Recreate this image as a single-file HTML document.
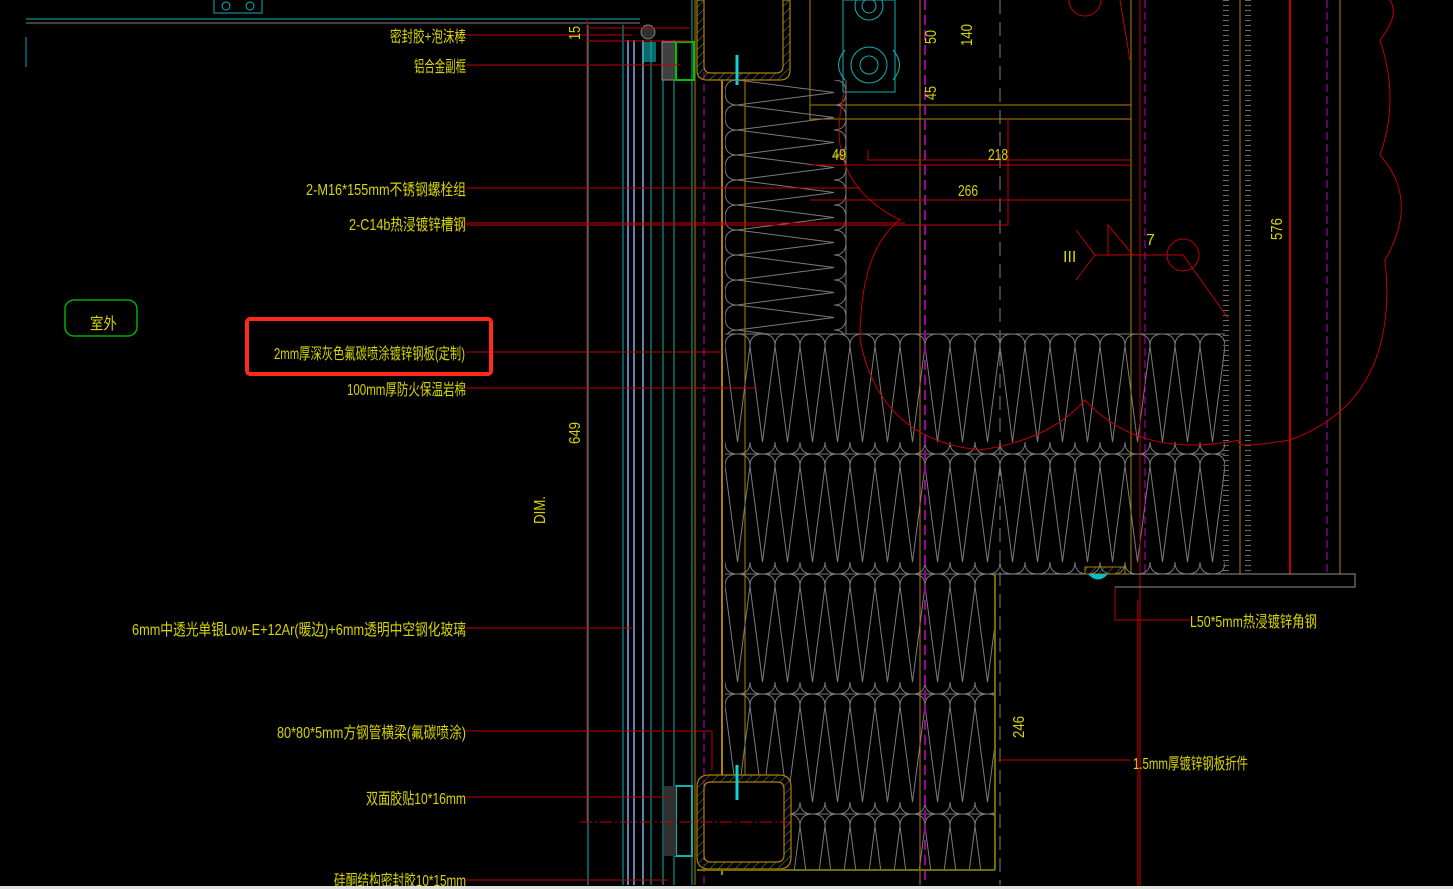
<!DOCTYPE html>
<html><head><meta charset="utf-8"><style>
html,body{margin:0;padding:0;background:#000;width:1453px;height:889px;overflow:hidden}
svg{display:block}
text{font-family:"Liberation Sans","Noto Sans CJK SC",sans-serif;fill:#d8d400;font-size:16px}
</style></head><body>
<svg width="1453" height="889" viewBox="0 0 1453 889" xmlns="http://www.w3.org/2000/svg">
<defs>
<pattern id="ins" x="725" y="334" width="25" height="120" patternUnits="userSpaceOnUse">
<path d="M0,12 Q0,0 12.5,0 Q25,0 25,12 M0,108 Q0,120 12.5,120 Q25,120 25,108 M0,12 L12.5,108 L25,12" fill="none" stroke="#7a7a7a" stroke-width="1"/>
</pattern>
<pattern id="ins2" x="725" y="80" width="121" height="25" patternUnits="userSpaceOnUse">
<path d="M12,0 Q0,0 0,12.5 Q0,25 12,25 M109,0 Q121,0 121,12.5 Q121,25 109,25 M12,0 L109,12.5 L12,25" fill="none" stroke="#7a7a7a" stroke-width="1"/>
</pattern>
<pattern id="hatch" width="6" height="6" patternUnits="userSpaceOnUse" patternTransform="rotate(45)">
<line x1="0" y1="0" x2="0" y2="6" stroke="#5a8a80" stroke-width="1"/>
</pattern>
</defs>
<rect width="1453" height="889" fill="#000"/>
<rect x="214" y="-2" width="48" height="15" fill="none" stroke="#10b0b0"/>
<circle cx="226" cy="6" r="4" fill="none" stroke="#10b0b0"/><circle cx="250" cy="6" r="4" fill="none" stroke="#10b0b0"/>
<line x1="26" y1="19" x2="640" y2="19" stroke="#10b0b0"/>
<line x1="26" y1="23" x2="640" y2="23" stroke="#808080"/>
<line x1="26" y1="37" x2="26" y2="67" stroke="#10a0c0"/>
<g stroke-width="1">
<line x1="587" y1="20" x2="587" y2="822" stroke="#c00000"/>
<line x1="588" y1="25" x2="588" y2="885" stroke="#10b0b0"/>
<line x1="623" y1="25" x2="623" y2="885" stroke="#10b0b0"/>
<line x1="628" y1="40" x2="628" y2="885" stroke="#6080b0" stroke-width="2"/>
<line x1="634" y1="40" x2="634" y2="885" stroke="#6080b0" stroke-width="2"/>
<line x1="643" y1="40" x2="643" y2="885" stroke="#6080b0" stroke-width="2"/>
<line x1="651" y1="40" x2="651" y2="885" stroke="#10b0b0"/>
<line x1="663" y1="40" x2="663" y2="885" stroke="#10b0b0"/>
<line x1="674" y1="40" x2="674" y2="885" stroke="#10b0b0"/>
<line x1="692" y1="0" x2="692" y2="885" stroke="#10b0b0"/>
<line x1="695" y1="0" x2="695" y2="885" stroke="#b08000"/>
<line x1="704" y1="0" x2="704" y2="885" stroke="#c000c0" stroke-dasharray="8 4"/>
</g>
<circle cx="648" cy="32" r="7" fill="#303030" stroke="#808080"/>
<rect x="642" y="42" width="14" height="20" fill="#10b0b0" opacity=".6"/>
<rect x="662" y="42" width="14" height="38" fill="#404040" stroke="#909090"/>
<rect x="676" y="42" width="18" height="38" fill="none" stroke="#00c000" stroke-width="2"/>
<path d="M697,0 V70 Q697,80 707,80 H780 Q790,80 790,70 V0 H783 V66 Q783,73 776,73 H711 Q704,73 704,66 V0 Z" fill="url(#hatch)" stroke="#b08000" stroke-width="1.2"/>
<line x1="737" y1="55" x2="737" y2="85" stroke="#10d0d0" stroke-width="3"/>
<rect x="843" y="0" width="52" height="92" fill="none" stroke="#10b0b0"/>
<circle cx="869" cy="6" r="14" fill="none" stroke="#10b0b0"/><circle cx="869" cy="6" r="7" fill="none" stroke="#10b0b0"/>
<circle cx="869" cy="65" r="18" fill="none" stroke="#10b0b0"/><circle cx="869" cy="65" r="9" fill="none" stroke="#10b0b0"/>
<path d="M845,50 Q832,65 845,80 M893,50 Q906,65 893,80" fill="none" stroke="#10b0b0"/>
<line x1="810" y1="0" x2="810" y2="120" stroke="#b08000"/>
<line x1="810" y1="105" x2="1131" y2="105" stroke="#b08000"/>
<line x1="810" y1="119" x2="1131" y2="119" stroke="#b08000"/>
<rect x="725" y="80" width="121" height="254" fill="url(#ins2)"/>
<line x1="846" y1="80" x2="846" y2="334" stroke="#7a7a7a"/>
<line x1="722" y1="80" x2="722" y2="875" stroke="#b08000" stroke-width="2"/>
<line x1="745" y1="80" x2="745" y2="870" stroke="#b08000"/>
<rect x="725" y="334" width="500" height="240" fill="url(#ins)"/>
<rect x="725" y="574" width="270" height="296" fill="url(#ins)"/>
<g stroke="#7a7a7a"><line x1="725" y1="334" x2="1225" y2="334"/><line x1="725" y1="454" x2="1225" y2="454"/><line x1="725" y1="574" x2="1225" y2="574"/><line x1="725" y1="694" x2="995" y2="694"/><line x1="725" y1="814" x2="995" y2="814"/></g>
<line x1="920" y1="0" x2="920" y2="885" stroke="#b08000"/>
<line x1="925" y1="0" x2="925" y2="885" stroke="#a000a0" stroke-width="2" stroke-dasharray="10 5"/>
<line x1="995" y1="574" x2="995" y2="870" stroke="#707000" stroke-width="2"/>
<line x1="1000" y1="0" x2="1000" y2="885" stroke="#808080" stroke-dasharray="14 8"/>
<line x1="1131" y1="0" x2="1131" y2="574" stroke="#b08000"/>
<line x1="1145" y1="0" x2="1145" y2="574" stroke="#c000c0" stroke-dasharray="8 4"/>
<line x1="1140" y1="0" x2="1140" y2="889" stroke="#c00000"/>
<path d="M1226,0 V574 M1248,0 V574" stroke="#6a6a6a" stroke-width="6" stroke-dasharray="1 4" fill="none"/>
<line x1="1240" y1="0" x2="1240" y2="574" stroke="#b08000"/>
<line x1="1290" y1="0" x2="1290" y2="574" stroke="#c00000" stroke-width="2"/>
<line x1="1327" y1="0" x2="1327" y2="574" stroke="#c000c0" stroke-dasharray="8 4"/>
<line x1="1340" y1="0" x2="1340" y2="574" stroke="#b08000"/>
<path d="M1000,574 H1240 V574 H1355 V587 H1115" fill="none" stroke="#909090"/>
<rect x="1085" y="567" width="40" height="7" fill="url(#hatch)" stroke="#b08000"/>
<path d="M1088,574 Q1098,585 1108,574" fill="#10c0c0"/>
<!-- bottom tube -->
<rect x="697" y="775" width="94" height="94" rx="12" fill="#000"/>
<line x1="704" y1="780" x2="704" y2="865" stroke="#c000c0" stroke-dasharray="8 4"/>
<path fill-rule="evenodd" d="M709,775 H779 Q791,775 791,787 V857 Q791,869 779,869 H709 Q697,869 697,857 V787 Q697,775 709,775 Z M711,782 H777 Q784,782 784,789 V855 Q784,862 777,862 H711 Q704,862 704,855 V789 Q704,782 711,782 Z" fill="url(#hatch)" stroke="#b08000" stroke-width="1.2"/>
<line x1="737" y1="765" x2="737" y2="800" stroke="#10d0d0" stroke-width="3"/>
<rect x="676" y="786" width="16" height="70" fill="none" stroke="#10b0b0" stroke-width="2"/>
<rect x="664" y="786" width="12" height="70" fill="#303030"/>
<line x1="697" y1="870" x2="995" y2="870" stroke="#707000" stroke-width="2"/>
<path d="M845,90 Q820,180 900,220 Q860,250 860,340 Q880,440 980,450 Q1050,440 1085,400 Q1140,460 1240,440 Q1230,450 1290,440 Q1400,400 1385,260 Q1420,200 1380,155 Q1400,100 1380,40 Q1400,15 1390,0" fill="none" stroke="#c00000"/>
<circle cx="1085" cy="0" r="16" fill="none" stroke="#c00000"/>
<circle cx="1183" cy="255" r="16" fill="none" stroke="#c00000"/>
<path d="M1183,255 L1228,318 M1095,255 H1183 M1095,255 L1076,230 M1095,255 L1076,280 M1108,255 V225 L1133,255 M1120,0 L1130,60" fill="none" stroke="#c00000"/>
<g stroke="#c00000" fill="none">
<path d="M587,28 H690 M587,41 H690 M868,150 V160 H1131 M810,165 H1131 M810,200 H1131 M1008,119 V225 H466 M1115,587 V620 H1190 M998,760 H1130 M1138,600 V889"/>
</g>
<g stroke="#c00000">
<line x1="466" y1="35" x2="632" y2="35"/><line x1="466" y1="65" x2="680" y2="65"/>
<line x1="466" y1="188" x2="860" y2="188"/><line x1="466" y1="223" x2="905" y2="223"/>
<line x1="466" y1="352" x2="722" y2="352"/><line x1="466" y1="388" x2="757" y2="388"/>
<line x1="466" y1="628" x2="632" y2="628"/><line x1="466" y1="731" x2="712" y2="731"/>
<line x1="712" y1="731" x2="712" y2="770"/>
<line x1="466" y1="797" x2="668" y2="797"/><line x1="466" y1="880" x2="668" y2="880"/>
<line x1="580" y1="822" x2="790" y2="822" stroke-dasharray="12 3 2 3"/>
</g>
<text x="390" y="42" textLength="76" lengthAdjust="spacingAndGlyphs">密封胶+泡沫棒</text>
<text x="414" y="72" textLength="52" lengthAdjust="spacingAndGlyphs">铝合金副框</text>
<text x="306" y="195" textLength="160" lengthAdjust="spacingAndGlyphs">2-M16*155mm不锈钢螺栓组</text>
<text x="349" y="230" textLength="117" lengthAdjust="spacingAndGlyphs">2-C14b热浸镀锌槽钢</text>
<text x="274" y="359" textLength="191" lengthAdjust="spacingAndGlyphs">2mm厚深灰色氟碳喷涂镀锌钢板(定制)</text>
<text x="347" y="395" textLength="119" lengthAdjust="spacingAndGlyphs">100mm厚防火保温岩棉</text>
<text x="132" y="635" textLength="334" lengthAdjust="spacingAndGlyphs">6mm中透光单银Low-E+12Ar(暖边)+6mm透明中空钢化玻璃</text>
<text x="277" y="738" textLength="189" lengthAdjust="spacingAndGlyphs">80*80*5mm方钢管横梁(氟碳喷涂)</text>
<text x="366" y="804" textLength="100" lengthAdjust="spacingAndGlyphs">双面胶贴10*16mm</text>
<text x="334" y="886" textLength="132" lengthAdjust="spacingAndGlyphs">硅酮结构密封胶10*15mm</text>
<text x="1190" y="627" textLength="127" lengthAdjust="spacingAndGlyphs">L50*5mm热浸镀锌角钢</text>
<text x="1133" y="769" textLength="115" lengthAdjust="spacingAndGlyphs">1.5mm厚镀锌钢板折件</text>
<text x="832" y="160" font-size="15" textLength="14" lengthAdjust="spacingAndGlyphs">49</text>
<text x="988" y="160" font-size="15" textLength="20" lengthAdjust="spacingAndGlyphs">218</text>
<text x="958" y="196" font-size="15" textLength="20" lengthAdjust="spacingAndGlyphs">266</text>
<text x="1146" y="245" font-size="15">7</text>
<text x="1063" y="262" font-size="14">III</text>
<text font-size="15" transform="translate(580,444) rotate(-90)" textLength="22" lengthAdjust="spacingAndGlyphs">649</text>
<text font-size="14" transform="translate(545,524) rotate(-90)" textLength="28" lengthAdjust="spacingAndGlyphs">DIM.</text>
<text font-size="15" transform="translate(1282,240) rotate(-90)" textLength="22" lengthAdjust="spacingAndGlyphs">576</text>
<text font-size="15" transform="translate(1024,738) rotate(-90)" textLength="22" lengthAdjust="spacingAndGlyphs">246</text>
<text font-size="15" transform="translate(580,40) rotate(-90)" textLength="14" lengthAdjust="spacingAndGlyphs">15</text>
<text font-size="15" transform="translate(936,44) rotate(-90)" textLength="14" lengthAdjust="spacingAndGlyphs">50</text>
<text font-size="15" transform="translate(936,100) rotate(-90)" textLength="14" lengthAdjust="spacingAndGlyphs">45</text>
<text font-size="15" transform="translate(972,46) rotate(-90)" textLength="22" lengthAdjust="spacingAndGlyphs">140</text>
<rect x="65" y="300" width="72" height="36" rx="9" fill="none" stroke="#00b000" stroke-width="1.5"/>
<text x="90" y="329" font-size="21" textLength="27" lengthAdjust="spacingAndGlyphs">室外</text>
<rect x="247" y="319" width="244" height="55" rx="3" fill="none" stroke="#ff2a1a" stroke-width="4"/>
<rect x="0" y="886" width="1453" height="3" fill="#e0e0e0"/>
</svg>
</body></html>
